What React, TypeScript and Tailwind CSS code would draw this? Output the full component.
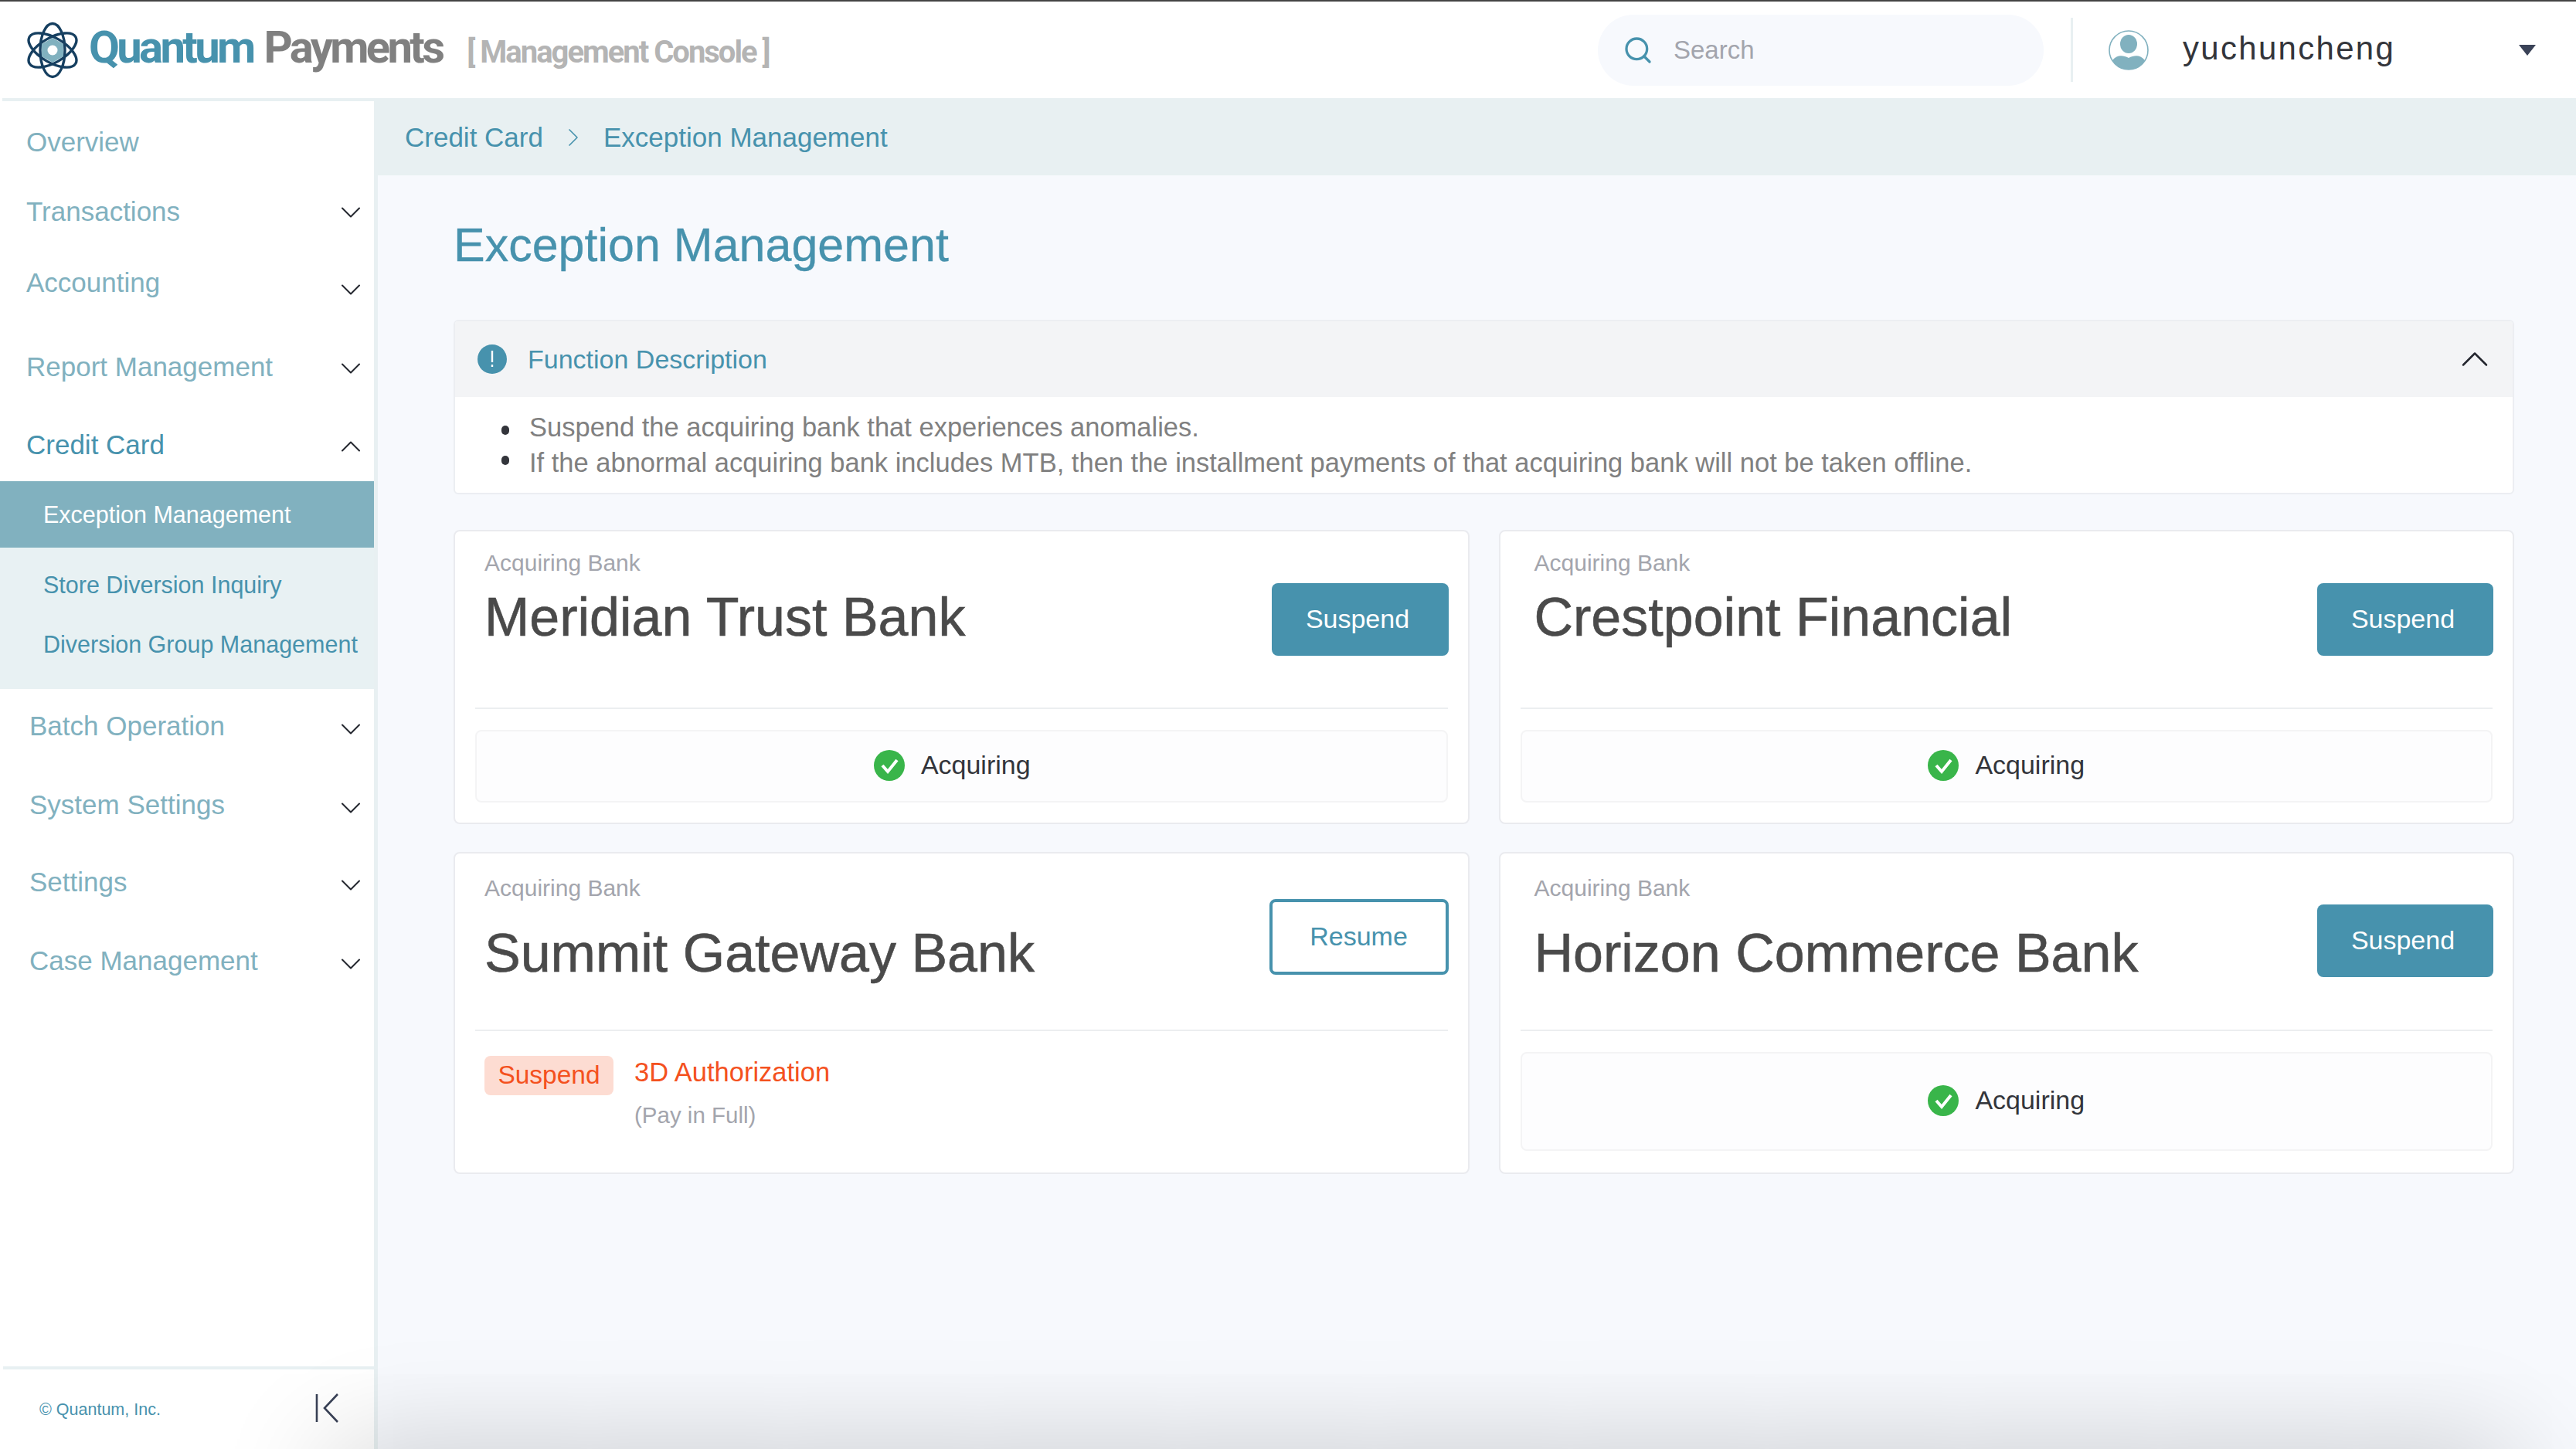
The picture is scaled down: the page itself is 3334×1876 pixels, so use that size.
import { ChevronDown, ChevronRight, ChevronUp, Search } from "lucide-react";

const sans = "font-['Liberation_Sans',Arial,sans-serif]";

function Logo() {
  return (
    <svg viewBox="0 0 68 74" className="h-[74px] w-[68px] shrink-0" fill="none">
      <g stroke="#163f60" strokeWidth="3.4">
        <ellipse cx="34" cy="37" rx="16" ry="34.5" />
        <ellipse cx="34" cy="37" rx="16" ry="34.5" transform="rotate(60 34 37)" />
        <ellipse cx="34" cy="37" rx="16" ry="34.5" transform="rotate(-60 34 37)" />
      </g>
      <path d="M34 21 L48 29 L48 45 L34 53 L20 45 L20 29 Z" fill="#81b1bf" />
      <circle cx="34" cy="37" r="6.5" fill="#fff" />
    </svg>
  );
}

function Avatar() {
  return (
    <svg viewBox="0 0 52 52" className="h-[52px] w-[52px] shrink-0">
      <circle cx="26" cy="26" r="25" fill="#fff" stroke="#81b1bf" strokeWidth="1.6" />
      <ellipse cx="26" cy="18" rx="11" ry="12" fill="#81b1bf" />
      <path d="M5 39 C12 31 19 33 26 36 C33 33 40 31 47 39 C43 47 35 51 26 51 C17 51 9 47 5 39 Z" fill="#81b1bf" />
    </svg>
  );
}

function Header() {
  return (
    <header className="flex h-[125px] items-center bg-white">
      <div className="ml-[34px] flex items-center">
        <Logo />
        <span className="-mt-[8px] ml-[13px] font-['Roboto',sans-serif] text-[58px] font-bold leading-none tracking-[-3.7px] text-[#4792ad]">
          Quantum
        </span>
        <span className="-mt-[8px] ml-[14px] font-['Roboto',sans-serif] text-[58px] font-bold leading-none tracking-[-3.7px] text-[#808080]">
          Payments
        </span>
        <span className="ml-[32px] mt-[6px] font-['Roboto',sans-serif] text-[40px] font-bold leading-none tracking-[-2px] text-[#b4b4b4]">
          [ Management Console ]
        </span>
      </div>
      <div className="ml-auto flex items-center">
        <div className={`flex h-[92px] w-[577px] items-center rounded-[46px] bg-[#f7f9fd] pl-[32px] ${sans}`}>
          <Search size={40} strokeWidth={2} className="text-[#4792ad]" />
          <span className="ml-[26px] text-[33px] text-[#a3a5ad]">Search</span>
        </div>
        <div className="ml-[35px] h-[83px] w-[3px] bg-[#e8f0f2]" />
        <div className="ml-[46px]">
          <Avatar />
        </div>
        <span className={`-mt-[4px] ml-[44px] w-[435px] text-[42px] leading-none tracking-[2.3px] text-[#33353b] ${sans}`}>
          yuchuncheng
        </span>
        <svg viewBox="0 0 22 14" className="mr-[52px] h-[14px] w-[22px]">
          <path d="M0 0 H22 L11 14 Z" fill="#3a4257" />
        </svg>
      </div>
    </header>
  );
}

type NavItem = { label: string; row: string; pad: string; chevron: string; open?: boolean };

const beforeSub: NavItem[] = [
  { label: "Overview", row: "h-[106px]", pad: "pl-[34px]", chevron: "" },
  { label: "Transactions", row: "h-[74px]", pad: "pl-[34px]", chevron: "mt-[2px]" },
  { label: "Accounting", row: "h-[110px]", pad: "pl-[34px]", chevron: "mt-[18px]" },
  { label: "Report Management", row: "h-[108px]", pad: "pl-[34px]", chevron: "mt-[4px]" },
  { label: "Credit Card", row: "h-[94px]", pad: "pl-[34px]", chevron: "mt-[4px]", open: true },
];

const afterSub: NavItem[] = [
  { label: "Batch Operation", row: "h-[96px]", pad: "pl-[38px]", chevron: "mt-[8px]" },
  { label: "System Settings", row: "h-[108px]", pad: "pl-[38px]", chevron: "mt-[8px]" },
  { label: "Settings", row: "h-[92px]", pad: "pl-[38px]", chevron: "mt-[8px]" },
  { label: "Case Management", row: "h-[112px]", pad: "pl-[38px]", chevron: "mt-[8px]" },
];

function NavRow({ item }: { item: NavItem }) {
  return (
    <div className={`flex items-center justify-between pr-[19px] text-[35px] ${item.row} ${item.pad}`}>
      <span className={item.open ? "text-[#4792ad]" : "text-[#81b1bf]"}>{item.label}</span>
      {item.chevron &&
        (item.open ? (
          <ChevronUp size={44} strokeWidth={1.1} className={`-mx-[11px] text-[#23262e] ${item.chevron}`} />
        ) : (
          <ChevronDown size={44} strokeWidth={1.1} className={`-mx-[11px] text-[#23262e] ${item.chevron}`} />
        ))}
    </div>
  );
}

function Sidebar() {
  return (
    <aside className={`flex w-[489px] shrink-0 flex-col border-r-[5px] border-[#e8f0f2] bg-white ${sans}`}>
      <div className="ml-[3px] h-[4px] bg-[#e8f0f2]" />
      {beforeSub.map((item) => (
        <NavRow key={item.label} item={item} />
      ))}
      <div className="bg-[#e8f1f3] pb-[29px] text-[30.5px] text-[#4792ad]">
        <div className="flex h-[86px] items-center bg-[#81b1bf] pl-[56px] pt-[2px] text-white">Exception Management</div>
        <div className="flex h-[98px] items-center pl-[56px]">Store Diversion Inquiry</div>
        <div className="flex h-[56px] items-center pl-[56px]">Diversion Group Management</div>
      </div>
      {afterSub.map((item) => (
        <NavRow key={item.label} item={item} />
      ))}
      <div className="mt-auto ml-[4px] flex h-[107px] items-start justify-between border-t-[4px] border-[#e8f0f2] pl-[47px] pr-[46px]">
        <span className="mt-[36px] text-[21.5px] text-[#4792ad]">© Quantum, Inc.</span>
        <svg viewBox="0 0 30 38" fill="none" className="mt-[31px] h-[38px] w-[30px]">
          <path d="M2 1 V37 M29 1 L12 19 L29 37" stroke="#3a4257" strokeWidth="2.6" />
        </svg>
      </div>
    </aside>
  );
}

function InfoIcon() {
  return (
    <svg viewBox="0 0 38 38" className="h-[38px] w-[38px] shrink-0">
      <circle cx="19" cy="19" r="19" fill="#4792ad" />
      <rect x="17.8" y="8" width="2.4" height="15" fill="#fff" />
      <rect x="17.8" y="26" width="2.4" height="3" fill="#fff" />
    </svg>
  );
}

function CheckIcon() {
  return (
    <svg viewBox="0 0 40 40" className="h-[40px] w-[40px] shrink-0">
      <circle cx="20" cy="20" r="20" fill="#39b54a" />
      <path d="M11 20 L18 28 L30 13" fill="none" stroke="#fff" strokeWidth="4" />
    </svg>
  );
}

function Status({ box }: { box: string }) {
  return (
    <div className={`mx-[26px] flex items-center justify-center rounded-[8px] border-2 border-[#f4f4f5] bg-[#fdfdfe] pb-[3px] ${box}`}>
      <CheckIcon />
      <span className="ml-[21px] text-[34px] text-[#33353b]">Acquiring</span>
    </div>
  );
}

type Bank = {
  name: string;
  action: "Suspend" | "Resume";
  pad: string;
  label: string;
  title: string;
  button: string;
  box?: string;
  card: string;
};

const banks: Bank[] = [
  { name: "Meridian Trust Bank", action: "Suspend", pad: "pl-[38px]", label: "mt-[21px]", title: "mt-[10px]", button: "mt-[67px] w-[229px]", box: "mt-[27px] h-[94px] pr-[24px]", card: "h-[381px]" },
  { name: "Crestpoint Financial", action: "Suspend", pad: "pl-[44px]", label: "mt-[21px]", title: "mt-[10px]", button: "mt-[67px] w-[228px]", box: "mt-[27px] h-[94px]", card: "h-[381px]" },
  { name: "Summit Gateway Bank", action: "Resume", pad: "pl-[38px]", label: "mt-[25px]", title: "mt-[24px]", button: "mt-[59px] w-[232px]", card: "h-[417px]" },
  { name: "Horizon Commerce Bank", action: "Suspend", pad: "pl-[44px]", label: "mt-[25px]", title: "mt-[24px]", button: "mt-[66px] w-[228px]", box: "mt-[27px] h-[128px]", card: "h-[417px]" },
];

function BankCard({ bank }: { bank: Bank }) {
  const resume = bank.action === "Resume";
  return (
    <div className={`rounded-[8px] border-2 border-[#eaebef] bg-white ${bank.card}`}>
      <div className={`flex h-[228px] justify-between pr-[25px] ${bank.pad}`}>
        <div>
          <div className={`text-[30px] leading-[40px] text-[#a3a5ad] ${bank.label}`}>Acquiring Bank</div>
          <div className={`text-[70px] leading-[80px] text-[#4a4a4a] [-webkit-text-stroke:0.6px_#4a4a4a] ${bank.title}`}>
            {bank.name}
          </div>
        </div>
        <button
          className={`shrink-0 rounded-[8px] text-[34px] ${bank.button} ${
            resume
              ? "h-[98px] border-[4px] border-[#4792ad] bg-white pb-[2px] text-[#4792ad]"
              : "h-[94px] bg-[#4792ad] pb-[2px] pr-[6px] text-white"
          }`}
        >
          {bank.action}
        </button>
      </div>
      <div className="mx-[26px] h-[2px] bg-[#eceef0]" />
      {bank.box ? (
        <Status box={bank.box} />
      ) : (
        <div className="mt-[32px] flex pl-[38px]">
          <span className="flex h-[51px] w-[167px] items-center justify-center rounded-[8px] bg-[#fddcd2] text-[33.5px] text-[#f4511e]">
            Suspend
          </span>
          <div className="ml-[27px]">
            <div className="text-[34.5px] leading-[42px] text-[#f4511e]">3D Authorization</div>
            <div className="mt-[15px] text-[29.5px] leading-[40px] text-[#a3a5ad]">(Pay in Full)</div>
          </div>
        </div>
      )}
    </div>
  );
}

const notes = [
  { text: "Suspend the acquiring bank that experiences anomalies.", dot: "mt-[8px]" },
  {
    text: "If the abnormal acquiring bank includes MTB, then the installment payments of that acquiring bank will not be taken offline.",
    dot: "mb-[6px]",
  },
];

function Main() {
  return (
    <main className={`flex-1 bg-[#f7f9fd] ${sans}`}>
      <div className="flex h-[100px] items-center bg-[#e8f0f2] pl-[35px] pt-[2px] text-[35px] text-[#4792ad]">
        <span>Credit Card</span>
        <ChevronRight size={40} strokeWidth={1} className="mx-[19px] text-[#4792ad]" />
        <span>Exception Management</span>
      </div>
      <div className="pl-[98px] pr-[80px]">
        <h1 className="mt-[50px] text-[61px] leading-[80px] text-[#4792ad] [-webkit-text-stroke:0.3px_#4792ad]">
          Exception Management
        </h1>
        <section className="mt-[57px] overflow-hidden rounded-[6px] border-2 border-[#eceef2] bg-white">
          <div className="flex h-[98px] items-center bg-[#f3f4f6] pl-[29px] pr-[34px]">
            <InfoIcon />
            <span className="ml-[27px] text-[34px] text-[#4792ad]">Function Description</span>
            <ChevronUp size={60} strokeWidth={1} className="-mr-[15px] ml-auto text-[#23262e]" />
          </div>
          <ul className="h-[124px] pl-[60px] pt-[16px] text-[34.5px] leading-[46px] text-[#808080]">
            {notes.map((note) => (
              <li key={note.dot} className="flex items-center">
                <span className={`h-[12px] w-[10px] shrink-0 rounded-full bg-[#33353b] ${note.dot}`} />
                <span className="ml-[26px]">{note.text}</span>
              </li>
            ))}
          </ul>
        </section>
        <div className="mt-[46px] grid grid-cols-2 gap-x-[38px] gap-y-[36px]">
          {banks.map((bank) => (
            <BankCard key={bank.name} bank={bank} />
          ))}
        </div>
      </div>
    </main>
  );
}

export default function App() {
  return (
    <div className="relative flex h-[1876px] flex-col overflow-hidden border-t-2 border-[#444444] bg-white">
      <Header />
      <div className="flex flex-1">
        <Sidebar />
        <Main />
      </div>
      {/* soft shadow rising from below the window */}
      <div className="pointer-events-none absolute left-[430px] right-[80px] top-full h-[200px] shadow-[0_0_150px_rgba(0,0,0,0.2)]" />
    </div>
  );
}
